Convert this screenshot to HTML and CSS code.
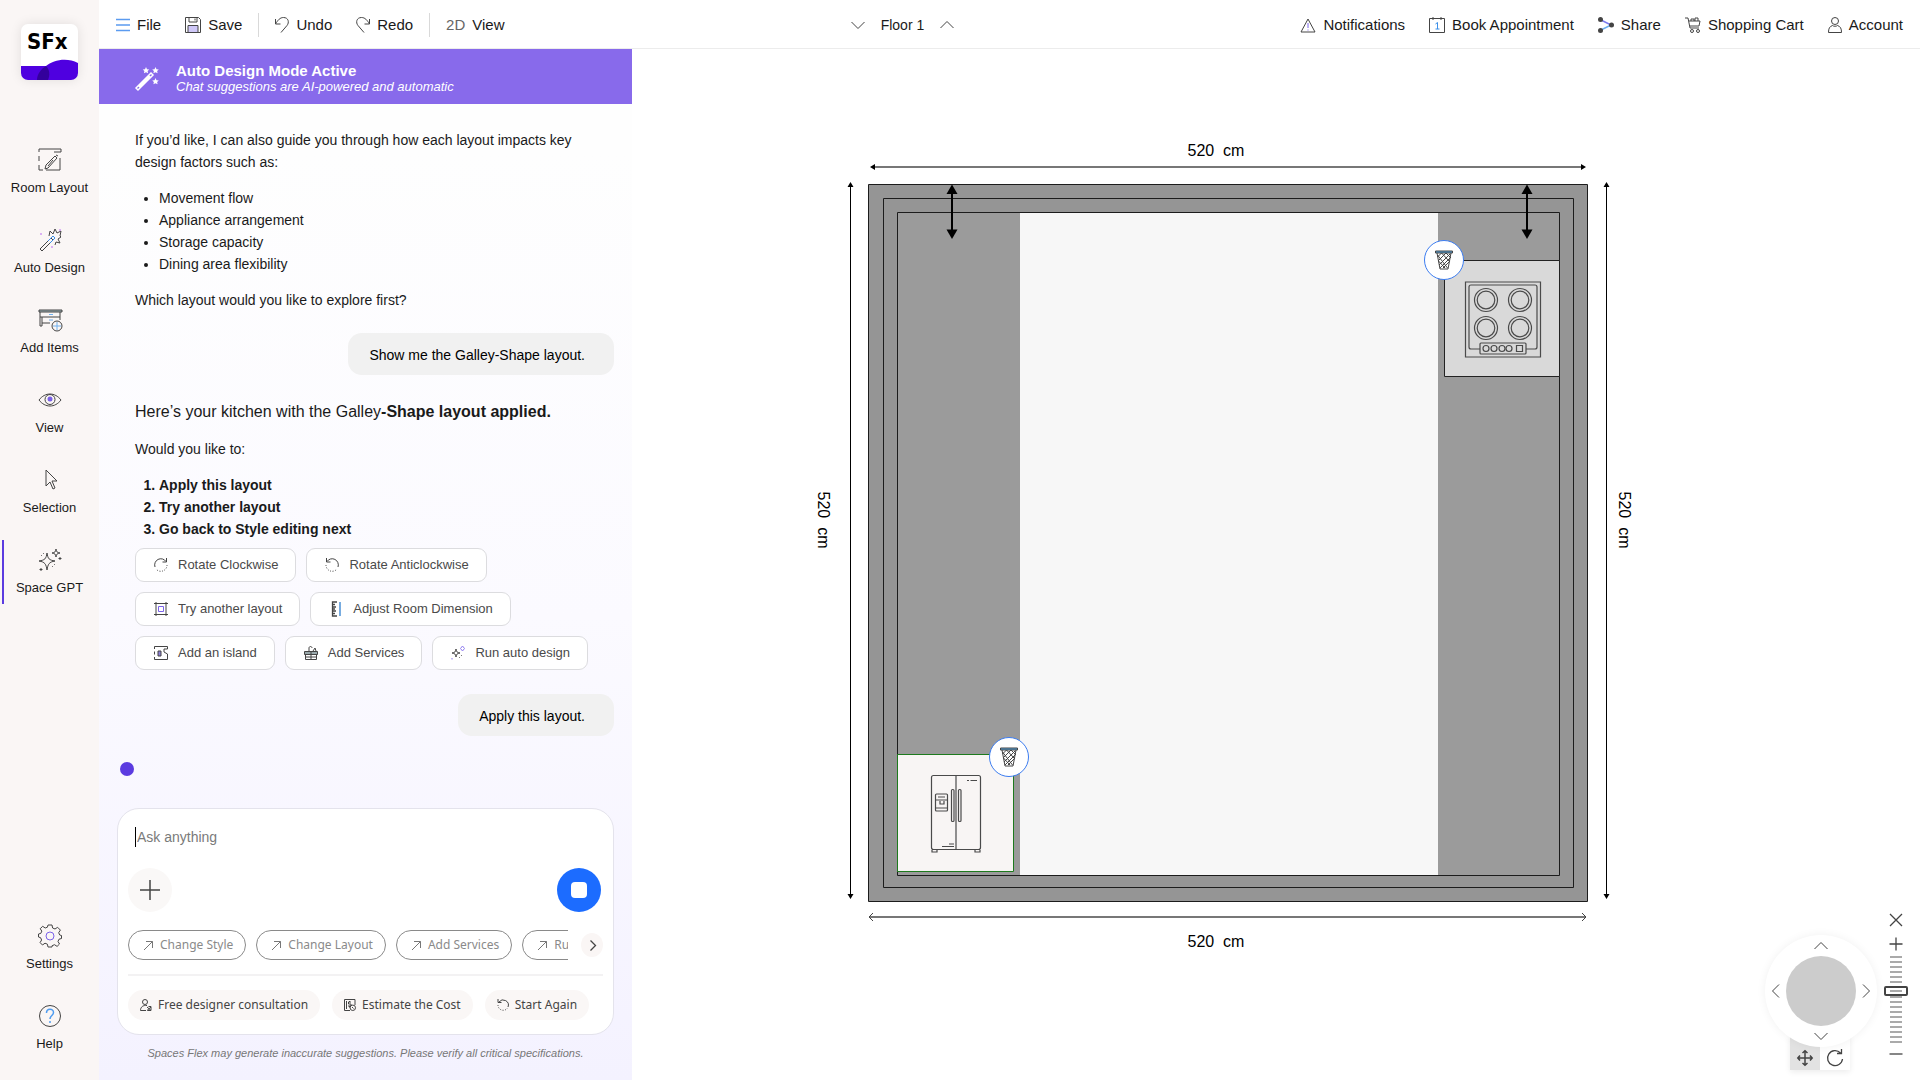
FILE: index.html
```html
<!DOCTYPE html>
<html lang="en">
<head>
<meta charset="utf-8">
<title>Spaces Flex – Space GPT</title>
<link rel="stylesheet" href="styles.css">
</head>
<body>
<div class="app">
  <aside class="sidebar">
    <a class="logo" href="#" aria-label="SFx home">
      <span class="logo-text">SFx</span>
      <svg class="logo-wave" viewBox="0 0 57 21" preserveAspectRatio="none"><path fill="#4f00e0" d="M0 7h25C32 1 46-2 57 4v17H0z"/><path fill="#33009c" d="M25 7c4 4 4 9 2 14H16c0-6 4-11 9-14z"/></svg>
    </a>
    <nav class="side-nav">
      <a class="side-item" href="#">
        <svg class="icon-24" viewBox="0 0 24 24"><path d="M1 4V1h22v3h-7M1 8v5M1 17v5h4M22 10v12H8M20 8l-2-1"/><path d="M7 21l1-4 9-9 2 2-9 10zM10 18l5-6"/></svg>
        <span>Room Layout</span></a>
      <a class="side-item" href="#">
        <svg class="icon-24" viewBox="0 0 24 24"><path d="M2 21L13 10l2 2L4 23z"/><path stroke="#3b8fe8" d="M10 13l5-5 2 2-5 5"/><path d="M11 8l1-5 3 3 2-5 2 4 4-2-1 5 1 1-3 2 2 4-4-1-1 3"/><g class="dot-violet"><circle cx="3" cy="6" r="1"/><circle cx="14" cy="19" r="1"/><circle cx="22" cy="2" r="1"/></g></svg>
        <span>Auto Design</span></a>
      <a class="side-item" href="#">
        <svg class="icon-24" viewBox="0 0 24 24"><path fill="#9db0b4" d="M1 2h23v2H1z"/><path d="M2 4v14h2v-3h8M22 4v8M2 9h20M4 15V9"/><path stroke="#6fb0ef" d="M11 6.500h4M11 12h4M19 14v8M15 18h8"/><circle cx="19" cy="18" r="5"/></svg>
        <span>Add Items</span></a>
      <a class="side-item" href="#">
        <svg class="icon-24" viewBox="0 0 24 24"><path d="M1 12c6-8 16-8 22 0-6 8-16 8-22 0z"/><circle cx="12" cy="11.500" r="5"/><circle cx="12" cy="11" r="2.500" fill="#7b62e8" stroke="none"/></svg>
        <span>View</span></a>
      <a class="side-item" href="#">
        <svg class="icon-24" viewBox="0 0 24 24"><path d="M8 2v16l4-4 3 7 2-1-3-7h5z"/></svg>
        <span>Selection</span></a>
      <a class="side-item active" href="#">
        <svg class="icon-24" viewBox="0 0 24 24"><path d="M9 5c1 6 2 7 8 8-6 1-7 3-8 9-1-6-2-8-8-9 6-1 7-2 8-8zM18 1c.5 3 1 3.500 4 4-3 .5-3.500 1-4 4-.5-3-1-3.500-4-4 3-.5 3.500-1 4-4zM3 20v3M1.500 21.500h3M22 9v3M20.500 10.500h3"/><path stroke-dasharray="1 2" d="M3 8l3-3M14 19l4-4"/></svg>
        <span>Space GPT</span></a>
    </nav>
    <nav class="side-nav side-foot">
      <a class="side-item" href="#">
        <svg class="icon-24" viewBox="0 0 24 24"><path d="M10 1h4l.6 3 2.400 1 2.600-1.700 2.800 2.800L20.700 8.700l1 2.300 1.800.5v3l-2.500.7-1 2.300 1.500 2.500-2.400 2.400-2.600-1.700-2.400 1L14 23h-4l-.6-2.800-2.400-1L4.500 21l-2.400-2.400L3.600 16l-1-2.300L.5 13v-3l2.300-.6 1-2.300L2.200 4.700l2.500-2.400L7.200 4l2.200-.8z"/><circle cx="12" cy="12" r="4" stroke="#7b62e8"/></svg>
        <span>Settings</span></a>
      <a class="side-item" href="#">
        <svg class="icon-24" viewBox="0 0 24 24"><circle cx="12" cy="12" r="10.500"/><path stroke="#4f9cf0" stroke-width="1.500" d="M8.500 9c0-5 7-5 7-.5 0 3-3.500 3-3.500 6.500M12 17v2"/></svg>
        <span>Help</span></a>
    </nav>
  </aside>

  <div class="main">
    <header class="topbar">
      <div class="bar-group">
        <button class="bar-btn" type="button"><svg class="icon-14" viewBox="0 0 14 14"><path stroke="#5b9bf0" stroke-width="1.500" d="M0 1.500h14M0 7h14M0 12.500h14"/></svg>File</button>
        <button class="bar-btn" type="button"><svg class="icon-16" viewBox="0 0 16 16"><path d="M.5.5h13l2 2v13H.5z"/><path d="M4 .5v4.500h8V.5M10 1.500v2"/><path fill="#cfc8f8" d="M3 8.500h10v7H3z"/></svg>Save</button>
        <span class="sep"></span>
        <button class="bar-btn" type="button"><svg class="icon-14" viewBox="0 0 14 16"><path d="M.5 2v5h5M.5 7C3 3 5 .5 8.500.5c5 0 6 5 3.500 8L6 15.500"/></svg>Undo</button>
        <button class="bar-btn" type="button"><svg class="icon-14" viewBox="0 0 14 16"><path d="M13.500 2v5h-5M13.500 7C11 3 9 .5 5.500.5c-5 0-6 5-3.500 8l6 7"/></svg>Redo</button>
        <span class="sep"></span>
        <button class="bar-btn" type="button"><span class="mode">2D</span>View</button>
      </div>
      <div class="floor">
        <button class="icon-btn" type="button" aria-label="Previous floor"><svg class="icon-14" viewBox="0 0 14 14"><path d="M.5 4L7 10.500 13.500 4"/></svg></button>
        <span class="floor-name">Floor 1</span>
        <button class="icon-btn" type="button" aria-label="Next floor"><svg class="icon-14" viewBox="0 0 14 14"><path d="M.5 10L7 3.500 13.500 10"/></svg></button>
      </div>
      <div class="bar-group">
        <button class="bar-btn" type="button"><svg class="icon-16" viewBox="0 0 16 16"><path d="M8 2l7 13H1z"/><path stroke="#7b62e8" d="M8 6v5M8 12.500v1"/></svg>Notifications</button>
        <button class="bar-btn" type="button"><svg class="icon-16" viewBox="0 0 16 16"><path d="M.5 1.500h15v14H.5zM4 0v3M12 0v3"/><path stroke="#3b8fe8" d="M6.500 7L8.500 5.500V12M6.500 12h4"/></svg>Book Appointment</button>
        <button class="bar-btn" type="button"><svg class="icon-16" viewBox="0 0 16 16"><path stroke="#7b7bf0" stroke-width="1.500" d="M3 3l10 5"/><path stroke="#6fb0ef" stroke-width="1.500" d="M13 8L3 13"/><g fill="#444" stroke="none"><circle cx="2.500" cy="2.500" r="2.500"/><circle cx="13.500" cy="8" r="2.500"/><circle cx="2.500" cy="13.500" r="2.500"/></g></svg>Share</button>
        <button class="bar-btn" type="button"><svg class="icon-16" viewBox="0 0 16 16"><path d="M0 1h3l2 10h9M4 4h11l-1 5H5M6 4V2h3v2M10 4V1h3v3"/><circle cx="7" cy="14" r="1.500"/><circle cx="13" cy="14" r="1.500"/></svg>Shopping Cart</button>
        <button class="bar-btn" type="button"><svg class="icon-14" viewBox="0 0 14 16"><circle cx="7" cy="4" r="3.500"/><path d="M.5 15.500c0-4 1-6 4-7 1 1 4 1 5 0 3 1 4 3 4 7z"/></svg>Account</button>
      </div>
    </header>

    <div class="work">
      <section class="chat">
        <div class="banner">
          <svg class="icon-24 banner-icon" viewBox="0 0 24 24"><path stroke-width="1.500" d="M1 21L16 6l2 2L3 23zM4 20L15 9"/><g fill="#fff" stroke="none"><path id="star" d="M11 0l1 2.200 2.300.2-1.700 1.600.5 2.300L11 5.200 8.900 6.300l.5-2.300L7.700 2.400l2.300-.2z"/><use href="#star" x="9.500"/><use href="#star" x="9.500" y="11"/></g></svg>
          <div class="banner-text">
            <h1 class="banner-title">Auto Design Mode Active</h1>
            <p class="banner-sub">Chat suggestions are AI-powered and automatic</p>
          </div>
        </div>

        <div class="messages">
          <p>If you’d like, I can also guide you through how each layout impacts key design factors such as:</p>
          <ul>
            <li>Movement flow</li>
            <li>Appliance arrangement</li>
            <li>Storage capacity</li>
            <li>Dining area flexibility</li>
          </ul>
          <p>Which layout would you like to explore first?</p>
          <p class="bubble">Show me the Galley-Shape layout.</p>
          <p class="lead">Here’s your kitchen with the Galley<strong>-Shape layout applied.</strong></p>
          <p>Would you like to:</p>
          <ol>
            <li>Apply this layout</li>
            <li>Try another layout</li>
            <li>Go back to Style editing next</li>
          </ol>
          <div class="options">
            <div class="option-row">
              <button class="option" type="button"><svg class="icon-14" viewBox="0 0 14 14"><path d="M1 9A6.200 6.200 0 0 1 12 3.500M12.500 0v4h-4"/><path stroke-dasharray="1 1.500" d="M13 7A6.200 6.200 0 0 1 2 11"/></svg>Rotate Clockwise</button>
              <button class="option" type="button"><svg class="icon-14" viewBox="0 0 14 14"><path d="M13 9A6.200 6.200 0 0 0 2 3.500M1.500 0v4h4"/><path stroke-dasharray="1 1.500" d="M1 7a6.200 6.200 0 0 0 11 4"/></svg>Rotate Anticlockwise</button>
            </div>
            <div class="option-row">
              <button class="option" type="button"><svg class="icon-14" viewBox="0 0 14 14"><path d="M2 0v14M12 0v14M0 1.500h14M0 12.500h14"/><path stroke="#7b62e8" d="M4.500 4.500h5v5h-5z"/></svg>Try another layout</button>
              <button class="option" type="button"><svg class="icon-14" viewBox="0 0 14 14"><path stroke-width="1.300" d="M8 0H3.500v14H8M3.500 2.500H6M3.500 5H7M3.500 7H6M3.500 9H7M3.500 11.500H6"/><path stroke="#2f7fd0" stroke-width="1.300" d="M11 0v14"/></svg>Adjust Room Dimension</button>
            </div>
            <div class="option-row">
              <button class="option" type="button"><svg class="icon-14" viewBox="0 0 14 14"><path d="M.5 3V.5h13V3H10v3l3.500 2v5.500H.5V11M.5 5.500v3"/><path fill="#8f82d8" d="M4 5h3v5H4z"/></svg>Add an island</button>
              <button class="option" type="button"><svg class="icon-14" viewBox="0 0 14 14"><path fill="#9aa9ac" d="M.5 5.500h13v3H.5z"/><path d="M1.500 8.500v5h11v-5M7 5.500v8M1.500 11h11M5 5V2c0-2 3-2 3 0M9 5l2-3 1 3"/></svg>Add Services</button>
              <button class="option" type="button"><svg class="icon-14" viewBox="0 0 14 14"><path d="M5 3c.5 3 1 3.500 4 4-3 .5-3.500 1-4 4-.5-3-1-3.500-4-4 3-.5 3.500-1 4-4z"/><path stroke="#8f7cf0" d="M11.500 0l2 2.500-2 2.500-2-2.500zM1 12v1.500"/><path stroke-dasharray="1 2" d="M8 12l4-4"/></svg>Run auto design</button>
            </div>
          </div>
          <p class="bubble">Apply this layout.</p>
          <span class="typing" role="status" aria-label="Working"></span>
        </div>

        <div class="composer-wrap">
          <form class="composer">
            <div class="ask"><span class="caret"></span><input class="ask-input" type="text" placeholder="Ask anything" aria-label="Ask anything"></div>
            <div class="actions">
              <button class="plus" type="button" aria-label="Add attachment"><svg class="icon-20" viewBox="0 0 20 20"><path stroke-width="1.500" d="M10 0v20M0 10h20"/></svg></button>
              <button class="stop" type="button" aria-label="Stop"><span class="stop-mark"></span></button>
            </div>
            <div class="chip-line">
              <div class="chips">
                <button class="chip" type="button"><svg class="icon-9" viewBox="0 0 9 9"><path d="M0 9l8.500-8.500M2 .5h6.500V7"/></svg>Change Style</button>
                <button class="chip" type="button"><svg class="icon-9" viewBox="0 0 9 9"><path d="M0 9l8.500-8.500M2 .5h6.500V7"/></svg>Change Layout</button>
                <button class="chip" type="button"><svg class="icon-9" viewBox="0 0 9 9"><path d="M0 9l8.500-8.500M2 .5h6.500V7"/></svg>Add Services</button>
                <button class="chip" type="button"><svg class="icon-9" viewBox="0 0 9 9"><path d="M0 9l8.500-8.500M2 .5h6.500V7"/></svg>Run auto design</button>
              </div>
              <button class="more" type="button" aria-label="More suggestions"><svg class="icon-9" viewBox="0 0 9 9"><path stroke-width="1.300" d="M2.500-.5l5 5-5 5"/></svg></button>
            </div>
            <hr class="rule">
            <div class="quick-line">
              <button class="quick" type="button"><svg class="icon-12" viewBox="0 0 12 12"><circle cx="5" cy="3" r="2.500"/><path d="M7 6.500C3 6 .5 8 .5 11.500H6M7 8l4 3.500M7 11.500L11 8M8.500 7.500h2.500v4H7.500"/></svg>Free designer consultation</button>
              <button class="quick" type="button"><svg class="icon-12" viewBox="0 0 12 12"><path d="M11 6V.5H.5v11H6M5.500 2v1M7 3H4.500v2H7v2H4M5.500 7v1.500M2.500 2v8"/><circle cx="8.800" cy="8.800" r="2.700"/><path d="M8 8l1.500 1.500"/></svg>Estimate the Cost</button>
              <button class="quick" type="button"><svg class="icon-12" viewBox="0 0 12 12"><path d="M11 8A5.200 5.200 0 0 0 2 3M1 0v3.500h3.500"/><path stroke-dasharray="1 1.500" d="M1 6a5.200 5.200 0 0 0 9.500 3"/></svg>Start Again</button>
            </div>
          </form>
          <p class="disclaimer">Spaces Flex may generate inaccurate suggestions. Please verify all critical specifications.</p>
        </div>
      </section>

      <section class="canvas" aria-label="Floor plan">
        <svg class="plan" viewBox="632 49 1288 1031">
          <g fill="#959595" stroke="#1c1c1c">
            <path d="M868.500 184.500h719v717h-719z"/><path d="M883.500 198.500h690v689h-690z"/>
            <path fill="#9b9b9b" d="M897.500 212.500h662v663h-662z"/>
          </g>
          <path fill="#f7f7f7" d="M1020 213h418v662h-418z"/>
          <g stroke="#444" fill="none">
            <path stroke="#777" stroke-width="2" d="M873 167h710"/><path d="M850.500 186v709M1606.500 186v709" stroke="#000"/>
            <path stroke="#777" stroke-width="2" d="M870 917h715"/><path d="M873 913l-4 4 4 4M1582 913l4 4-4 4"/>
          </g>
          <path d="M870 167l5-3v6zM1586 167l-5-3v6zM850.500 182l3 5h-6zM850.500 899l3-5h-6zM1606.500 182l3 5h-6zM1606.500 899l3-5h-6z"/>
          <g id="depth"><path d="M951 190h2v44h-2z"/><path d="M952 184.500l5.500 9.500h-11z"/><path d="M952 239l5.500-9.500h-11z"/></g>
          <use href="#depth" x="575"/>
          <g class="dims">
            <text x="1216" y="156">520&#160;&#160;cm</text>
            <text x="1216" y="947">520&#160;&#160;cm</text>
            <text transform="translate(818 520) rotate(90)">520&#160;&#160;cm</text>
            <text transform="translate(1619 520) rotate(90)">520&#160;&#160;cm</text>
          </g>
          <path fill="#d9d9d9" stroke="#222" d="M1444.500 260.500h115v116h-115z"/>
          <g fill="none" stroke="#4a4a4a" stroke-width="1.200">
            <path d="M1465.500 282h75v75h-75z"/>
            <path d="M1480 349h-9q-2 0-2-2v-60q0-2 2-2h64q2 0 2 2v60q0 2-2 2h-9"/>
            <g id="burner"><circle cx="1486" cy="300" r="11.500"/><circle cx="1486" cy="300" r="8.800"/></g>
            <use href="#burner" x="34"/><use href="#burner" y="28"/><use href="#burner" x="34" y="28"/>
            <rect x="1480" y="343" width="46" height="11" rx="1"/>
            <circle cx="1486" cy="348.500" r="3"/><circle cx="1494" cy="348.500" r="3"/><circle cx="1502" cy="348.500" r="3"/><circle cx="1509" cy="348.500" r="3"/><path d="M1516.500 345.500h6v6h-6z"/>
          </g>
          <path fill="#f8f5f4" stroke="#1d7a1d" d="M897.500 754.500h116v117h-116z"/>
          <g fill="none" stroke="#4a4a4a" stroke-width="1.200">
            <rect x="931.500" y="775.500" width="49" height="74" rx="2"/><path d="M956 776v73"/>
            <rect x="951.500" y="789.500" width="2.500" height="32" rx="1"/><rect x="958.500" y="789.500" width="2.500" height="32" rx="1"/>
            <rect x="935.500" y="794" width="12" height="17" rx="1"/><path d="M936 800h11M940 801v3h4v-3M936 808h11M938 797h7"/>
            <path stroke-dasharray="2 1.500" d="M967 780.500h5"/><path d="M972 780.500h5M949 844h5M942 846.500h12M932 850v2h5v-2M975 850v2h5v-2"/>
          </g>
          <foreignObject x="1424" y="240" width="41" height="41"><button class="trash" type="button" aria-label="Remove hob"><svg class="icon-20" viewBox="0 0 20 20"><path fill="#52a0d8" d="M1.500 1h17v2h-17z"/><path d="M3 3l3 16h8l3-16M3.500 7l4-4 8.500 9M4 11l8-8 5 5M5 15L16 4M6 18l10-10M3.500 5l10 13M4.500 11l6.500 7M9 18l6-6"/></svg></button></foreignObject>
          <foreignObject x="989" y="737" width="41" height="41"><button class="trash" type="button" aria-label="Remove fridge"><svg class="icon-20" viewBox="0 0 20 20"><path fill="#52a0d8" d="M1.500 1h17v2h-17z"/><path d="M3 3l3 16h8l3-16M3.500 7l4-4 8.500 9M4 11l8-8 5 5M5 15L16 4M6 18l10-10M3.500 5l10 13M4.500 11l6.500 7M9 18l6-6"/></svg></button></foreignObject>
        </svg>

        <div class="navigator">
          <div class="pad">
            <div class="disc">
              <button class="icon-btn up" type="button" aria-label="Pan up"><svg class="icon-14" viewBox="0 0 14 14"><path d="M.5 10L7 3.500 13.500 10"/></svg></button>
              <button class="icon-btn left" type="button" aria-label="Pan left"><svg class="icon-14" viewBox="0 0 14 14"><path d="M10 .5L3.500 7l6.500 6.500"/></svg></button>
              <span class="knob"></span>
              <button class="icon-btn right" type="button" aria-label="Pan right"><svg class="icon-14" viewBox="0 0 14 14"><path d="M4 .5L10.500 7 4 13.500"/></svg></button>
              <button class="icon-btn down" type="button" aria-label="Pan down"><svg class="icon-14" viewBox="0 0 14 14"><path d="M.5 4L7 10.500 13.500 4"/></svg></button>
            </div>
            <div class="modes">
              <button class="mode-btn on" type="button" aria-label="Move"><svg class="icon-16" viewBox="0 0 16 16"><path stroke-width="1.500" d="M8 1v14M1 8h14M5.500 3L8 .8 10.500 3M5.500 13L8 15.200 10.500 13M3 5.500L.8 8 3 10.500M13 5.500L15.200 8 13 10.500"/></svg></button>
              <button class="mode-btn" type="button" aria-label="Rotate"><svg class="icon-16" viewBox="0 0 16 16"><path stroke-width="1.300" d="M15.500 9A7.500 7.500 0 1 1 13.500 3M14.500-1v4.500H10"/></svg></button>
            </div>
          </div>
          <div class="zoom">
            <button class="icon-btn" type="button" aria-label="Close"><svg class="icon-14" viewBox="0 0 14 14"><path stroke-width="1.300" d="M1 1l12 12M13 1L1 13"/></svg></button>
            <button class="icon-btn" type="button" aria-label="Zoom in"><svg class="icon-14" viewBox="0 0 14 14"><path stroke-width="1.300" d="M7 .5v13M.5 7h13"/></svg></button>
            <input class="zoom-range" type="range" min="0" max="100" value="61" aria-label="Zoom">
            <button class="icon-btn" type="button" aria-label="Zoom out"><svg class="icon-14" viewBox="0 0 14 14"><path stroke-width="1.300" d="M.5 7h13"/></svg></button>
          </div>
        </div>
      </section>
    </div>
  </div>
</div>
</body>
</html>
```
FILE: styles.css
```css
* { box-sizing: border-box; }
body {
  margin: 0;
  font: 14px/22px "Liberation Sans", Arial, sans-serif;
  color: #1a1a1a;
  background: #fff;
}
p, ul, ol, h1 { margin: 0; }
button { font: inherit; color: inherit; background: none; border: 0; padding: 0; cursor: pointer; }
a { color: inherit; text-decoration: none; }
svg { display: block; flex: none; fill: none; stroke: #444; overflow: visible; }
.icon-9 { width: 9px; height: 9px; }
.icon-12 { width: 12px; height: 12px; }
.icon-14 { width: 14px; height: 16px; }
.icon-16 { width: 16px; height: 16px; }
.icon-20 { width: 20px; height: 20px; }
.icon-24 { width: 24px; height: 24px; }
.dot-violet { fill: #d09af5; stroke: none; }

.app { display: flex; min-height: 100vh; }

/* Sidebar */
.sidebar {
  flex: none;
  width: 99px;
  display: flex;
  flex-direction: column;
  padding: 24px 0 20px;
  background: #faf6f5;
}
.logo {
  display: flex;
  flex-direction: column;
  justify-content: space-between;
  width: 57px;
  height: 56px;
  margin-left: 21px;
  border-radius: 7px;
  overflow: hidden;
  background: #fff;
  box-shadow: 0 0 12px rgba(0, 0, 0, .1);
}
.logo-text {
  padding: 4px 0 0 6px;
  font: bold 22px/28px "Liberation Sans Narrow", "DejaVu Sans Condensed", sans-serif;
  color: #000;
}
.logo-wave { width: 57px; height: 21px; stroke: none; }
.side-nav { display: flex; flex-direction: column; gap: 16px; margin-top: 60px; }
.side-foot { margin-top: auto; }
.side-item {
  display: flex;
  flex-direction: column;
  align-items: center;
  gap: 8px;
  height: 64px;
  padding-top: 8px;
  font-size: 13px;
  line-height: 16px;
  border-left: 2px solid transparent;
  border-right: 2px solid transparent;
  margin: 0 2px;
}
.side-item.active { border-left-color: #5b3be0; }

/* Top bar */
.main { flex: 1; min-width: 0; display: flex; flex-direction: column; }
.topbar {
  display: flex;
  align-items: center;
  justify-content: space-between;
  height: 49px;
  padding: 1px 5px 0;
  border-bottom: 1px solid #ececec;
  font-size: 15px;
}
.bar-group { display: flex; align-items: center; }
.bar-btn { display: flex; align-items: center; gap: 7px; padding: 0 12px; white-space: nowrap; }
.sep { width: 1px; height: 24px; margin: 0 4px; background: #d9d9d9; }
.mode { color: #666; }
.floor { display: flex; align-items: center; gap: 16px; font-size: 14px; }
.icon-btn { display: flex; align-items: center; justify-content: center; }

.work { flex: 1; display: flex; min-height: 0; }

/* Chat */
.chat {
  flex: none;
  width: 533px;
  display: flex;
  flex-direction: column;
  background: linear-gradient(#fefefe 10%, #fbfaff 55%, #f4f2ff);
}
.banner {
  display: flex;
  align-items: center;
  gap: 17px;
  height: 55px;
  padding: 4px 36px 0;
  background: #886aeb;
  color: #fff;
}
.banner-icon { stroke: #fff; }
.banner-title { font-size: 15px; line-height: 17px; }
.banner-sub { font-size: 13px; line-height: 16px; font-style: italic; }
.messages {
  flex: 1;
  display: flex;
  flex-direction: column;
  gap: 14px;
  padding: 25px 18px 0 36px;
}
.messages p { max-width: 450px; }
.messages ul, .messages ol { padding-left: 24px; }
.messages ol { font-weight: bold; }
.messages .lead { font-size: 16px; padding: 12px 0 1px; }
.messages .bubble {
  align-self: flex-end;
  margin-top: 8px;
  padding: 11px 29px 9px 21px;
  border-radius: 14px;
  background: #f1f1f1;
  color: #000;
}
.options { display: flex; flex-direction: column; gap: 10px; margin-top: -6px; padding-bottom: 2px; }
.option-row { display: flex; gap: 10px; }
.option {
  display: flex;
  align-items: center;
  gap: 10px;
  height: 34px;
  padding: 0 17px 0 18px;
  border: 1px solid #dcdcdf;
  border-radius: 9px;
  background: #fff;
  font-size: 13px;
  color: #4a4a4a;
}
.typing {
  width: 14px;
  height: 14px;
  margin: 12px 0 0 -15px;
  border-radius: 50%;
  background: #5b3be0;
}

/* Composer */
.composer-wrap { padding: 0 18px 18px; }
.composer {
  display: flex;
  flex-direction: column;
  padding: 13px 10px 14px;
  border: 1px solid #e4e3ec;
  border-radius: 22px;
  background: #fff;
}
.ask { display: flex; align-items: center; height: 30px; padding-left: 7px; }
.caret { width: 1px; height: 20px; background: #000; }
.ask-input { flex: 1; border: 0; padding: 0 1px; outline: 0; background: none; font: inherit; }
.ask-input::placeholder { color: #7a7a7a; }
.actions { display: flex; align-items: center; justify-content: space-between; height: 44px; margin: 16px 0 18px; padding-right: 2px; }
.plus, .stop, .more { display: flex; align-items: center; justify-content: center; border-radius: 50%; }
.plus { width: 44px; height: 44px; background: #faf8f7; }
.stop { width: 44px; height: 44px; background: #1c6cff; }
.stop-mark { width: 16px; height: 16px; border-radius: 4px; background: #fff; }
.chip-line { display: flex; align-items: center; gap: 13px; font: 12px/18px "Noto Sans", sans-serif; }
.chips { flex: 1; min-width: 0; display: flex; gap: 10px; overflow: hidden; }
.chip {
  flex: none;
  display: flex;
  align-items: center;
  gap: 7px;
  height: 30px;
  padding: 0 12px 0 15px;
  border: 1px solid #8a8a8a;
  border-radius: 15px;
  color: #8a8a8a;
}
.chip svg { stroke: #777; }
.more { width: 22px; height: 24px; background: #faf6f5; }
.rule { width: 100%; height: 2px; margin: 14px 0; border: 0; background: #f3f2f3; }
.quick-line { display: flex; gap: 12px; font: 12px/18px "Noto Sans", sans-serif; }
.quick {
  display: flex;
  align-items: center;
  gap: 6px;
  height: 30px;
  padding: 0 12px;
  border-radius: 15px;
  background: #faf7f6;
  color: #444;
  white-space: nowrap;
}
.disclaimer { padding-top: 9px; font-size: 11px; line-height: 18px; font-style: italic; text-align: center; color: #777; }

/* Floor plan */
.canvas { position: relative; flex: 1; min-width: 0; }
.plan { width: 100%; height: 100%; fill: #000; stroke: none; }
.plan svg { fill: none; stroke: #444; }
.dims { font-size: 16px; text-anchor: middle; }
.trash {
  display: flex;
  align-items: center;
  justify-content: center;
  width: 40px;
  height: 40px;
  border: 1px solid #3b7cf0;
  border-radius: 50%;
  background: #fff;
}
.navigator {
  position: absolute;
  right: 12px;
  bottom: 10px;
  display: flex;
  gap: 7px;
  align-items: flex-start;
}
.pad { display: flex; flex-direction: column; align-items: center; margin-top: 23px; }
.disc {
  position: relative;
  display: grid;
  grid-template: 20px 70px 20px / 20px 70px 20px;
  place-items: center;
  padding: 1px;
  border-radius: 50%;
  background: #fff;
  box-shadow: 0 0 10px rgba(0, 0, 0, .06);
}
.up, .down { grid-column: 2; }
.up { grid-row: 1; }
.left { grid-area: 2 / 1; }
.right { grid-area: 2 / 3; }
.down { grid-row: 3; }
.knob { grid-area: 2 / 2; width: 70px; height: 70px; border-radius: 50%; background: #ccc; }
.modes { display: flex; margin: -12px 2px 0 0; box-shadow: 0 2px 6px rgba(0, 0, 0, .08); }
.mode-btn { display: flex; align-items: flex-end; justify-content: center; width: 30px; height: 35px; padding-bottom: 4px; background: #fff; }
.mode-btn.on { background: #e2e2e2; }
.zoom { display: flex; flex-direction: column; align-items: center; gap: 8px; width: 24px; }
.zoom-range {
  -webkit-appearance: none;
  appearance: none;
  writing-mode: vertical-lr;
  direction: rtl;
  width: 24px;
  height: 87px;
  margin: -4px 0 -5px;
  background: repeating-linear-gradient(#aaa 0 2px, transparent 2px 5px) center / 12px 100% no-repeat;
}
.zoom-range::-webkit-slider-thumb {
  -webkit-appearance: none;
  width: 24px;
  height: 10px;
  border: 2px solid #444;
  border-radius: 2px;
  background: linear-gradient(#aaa, #aaa) center / 12px 2px no-repeat #fff;
}
```
